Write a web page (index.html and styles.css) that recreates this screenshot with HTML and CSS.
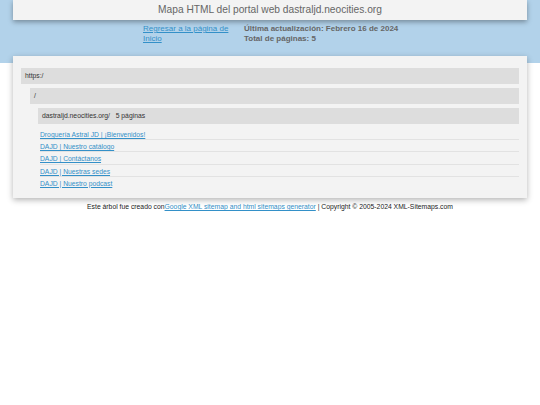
FILE: index.html
```html
<!DOCTYPE html>
<html lang="es">
<head>
<meta charset="utf-8">
<title>Mapa HTML del portal web dastraljd.neocities.org</title>
<link rel="stylesheet" href="styles.css">
</head>
<body>
<div class="top">
  <div class="title">Mapa HTML del portal web dastraljd.neocities.org</div>
  <div class="meta">
    <a class="home" href="#">Regresar a la página de Inicio</a>
    <div class="info">
      <div>Última actualización: Febrero 16 de 2024</div>
      <div>Total de páginas: 5</div>
    </div>
  </div>
</div>
<div class="main">
  <div class="lvl">
    <div class="row">https:/</div>
    <div class="lvl">
      <div class="row">/</div>
      <div class="lvl">
        <div class="row">dastraljd.neocities.org/&nbsp;&nbsp;&nbsp;5 páginas</div>
        <ul class="pages">
          <li><a href="#">Droguería Astral JD | ¡Bienvenidos!</a></li>
          <li><a href="#">DAJD | Nuestro catálogo</a></li>
          <li><a href="#">DAJD | Contáctanos</a></li>
          <li><a href="#">DAJD | Nuestras sedes</a></li>
          <li><a href="#">DAJD | Nuestro podcast</a></li>
        </ul>
      </div>
    </div>
  </div>
</div>
<div class="footer">Este árbol fue creado con<a href="#">Google XML sitemap and html sitemaps generator</a> | Copyright © 2005-2024 XML-Sitemaps.com</div>
</body>
</html>
```
FILE: styles.css
```css
html, body {
  margin: 0;
  padding: 0;
  background: #ffffff;
  font-family: "Liberation Sans", Arial, sans-serif;
}
.top {
  background: #b2d2ea;
  height: 63px;
  overflow: hidden;
}
.title {
  margin: 0 13px;
  height: 20px;
  line-height: 20px;
  background: #f3f3f3;
  color: #666666;
  font-size: 10.2px;
  text-align: center;
  box-shadow: 0 2px 5px rgba(0, 0, 0, 0.35);
}
.meta {
  display: flex;
  margin-top: 4px;
  padding-left: 143px;
  font-size: 8px;
  line-height: 9.5px;
}
.home {
  width: 90px;
  color: #3390c8;
  text-decoration: underline;
}
.info {
  margin-left: 11px;
  color: #666666;
  font-weight: bold;
}
.main {
  position: relative;
  margin: -7px 13px 0;
  padding: 12px 8px 9px;
  background: #f3f3f3;
  box-shadow: 0 2px 6px rgba(0, 0, 0, 0.3);
}
.lvl .lvl {
  margin-top: 4px;
  margin-left: 9px;
}
.lvl .lvl .lvl {
  margin-left: 8px;
}
.row {
  height: 16px;
  line-height: 16px;
  padding-left: 4px;
  background: #dddddd;
  color: #333333;
  font-size: 6.8px;
}
.pages {
  list-style: none;
  margin: 4px 0 0 2px;
  padding: 0;
}
.pages li {
  height: 12.2px;
  padding-top: 1px;
  line-height: 11px;
  font-size: 6.75px;
  border-bottom: 1px solid #e2e2e2;
  box-sizing: border-box;
}
.pages li:last-child {
  border-bottom: none;
}
.pages a {
  color: #3390c8;
  text-decoration: underline;
}
.footer {
  margin-top: 4px;
  text-align: center;
  font-size: 6.8px;
  line-height: 9px;
  color: #222222;
}
.footer a {
  color: #3390c8;
  text-decoration: underline;
}
```
